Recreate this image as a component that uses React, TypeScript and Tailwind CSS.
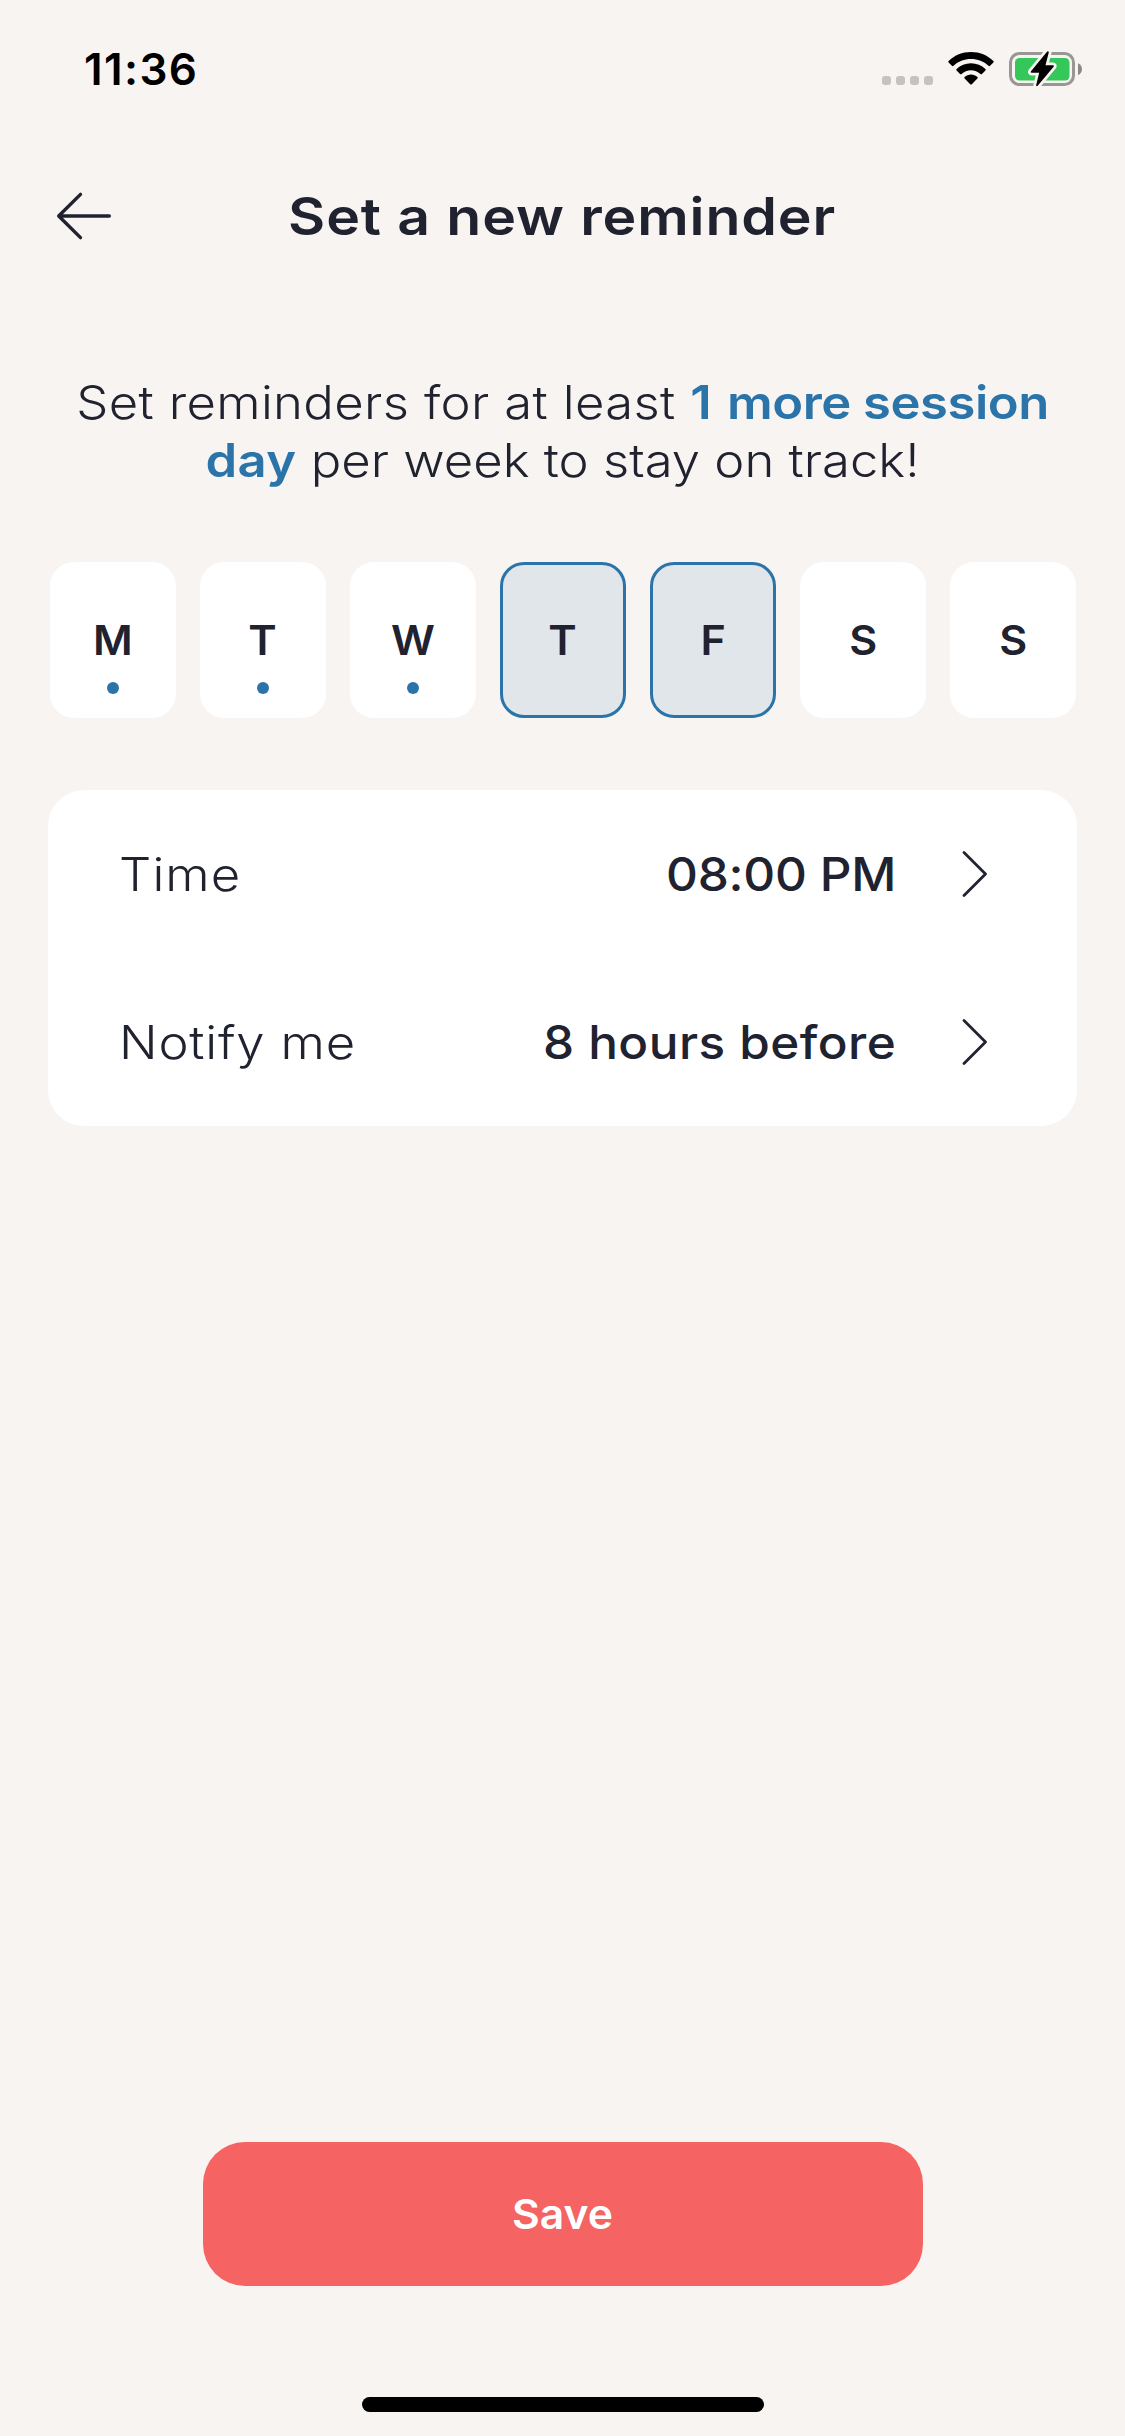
const FONT = "font-['Inter',sans-serif]";
const INK = "#20222f";

function SignalDots() {
  return (
    <div className="flex gap-[5px]">
      {[0, 1, 2, 3].map((i) => (
        <span key={i} className="size-[9px] rounded-[3px] bg-[#c5c2c0]" />
      ))}
    </div>
  );
}

function WifiIcon() {
  return (
    <svg width="46" height="34" viewBox="0 0 46 34" fill="#000">
      <path d="M23 0C31.6 0 39.500 3.300 45.400 8.900C45.900 9.400 45.900 10 45.400 10.500L42.100 13.800C41.600 14.300 41 14.300 40.500 13.800C35.800 9.500 29.700 7.100 23 7.100S10.200 9.500 5.500 13.800C5 14.300 4.400 14.300 3.900 13.800L0.600 10.500C0.100 10 0.100 9.400 0.600 8.900C6.500 3.300 14.400 0 23 0Z" />
      <path d="M23 11.200C28.500 11.200 33.600 13.300 37.400 16.900C37.900 17.400 37.900 18 37.400 18.500L34 21.900C33.500 22.400 32.900 22.400 32.400 21.900C29.900 19.600 26.600 18.200 23 18.200S16.100 19.600 13.600 21.900C13.100 22.400 12.500 22.400 12 21.900L8.600 18.500C8.100 18 8.100 17.400 8.600 16.900C12.400 13.300 17.500 11.200 23 11.200Z" />
      <path d="M23 22.500C25.500 22.500 27.700 23.400 29.400 24.900C29.900 25.400 29.900 26 29.400 26.500L23.800 32.200C23.300 32.700 22.700 32.700 22.200 32.200L16.600 26.500C16.100 26 16.100 25.400 16.600 24.900C18.300 23.400 20.500 22.500 23 22.500Z" />
    </svg>
  );
}

function BatteryIcon() {
  const bolt =
    "M38 0.800L22 20.200C21.400 21 21.800 21.700 22.700 21.700H30.200L27.200 33.800C26.900 35.300 28 35.700 28.900 34.600L44.600 15.700C45.200 14.900 44.900 14.200 43.900 14.200H36.500L39.700 1.800C40 0.300 38.900-0.300 38 0.800Z";
  return (
    <svg width="74" height="36" viewBox="0 0 74 36">
      <rect x="1.500" y="2.500" width="63" height="31" rx="9" fill="none" stroke="#999696" strokeWidth="3" />
      <path d="M69 12.300V24C71.400 23 73 20.800 73 18.150S71.400 13.300 69 12.300Z" fill="#8b8888" />
      <rect x="6" y="7" width="54.500" height="22.500" rx="4.500" fill="#34c759" />
      <path d={bolt} fill="#f8f4f1" stroke="#f8f4f1" strokeWidth="5.500" strokeLinejoin="round" />
      <path d={bolt} fill="#000" />
    </svg>
  );
}

function BackArrow() {
  return (
    <svg
      width="56"
      height="50"
      viewBox="0 0 56 50"
      fill="none"
      stroke={INK}
      strokeWidth="3.400"
      strokeLinecap="round"
      strokeLinejoin="round"
    >
      <path d="M53.300 25H2.700M24.500 3.400L2.700 25L24.500 46.600" />
    </svg>
  );
}

function Chevron() {
  return (
    <svg
      width="26"
      height="46"
      viewBox="0 0 26 46"
      fill="none"
      stroke={INK}
      strokeWidth="2.800"
      strokeLinecap="round"
      strokeLinejoin="round"
    >
      <path d="M2 1.600L23.500 23L2 44.400" />
    </svg>
  );
}

type Day = { label: string; dot?: boolean; selected?: boolean };

const days: Day[] = [
  { label: "M", dot: true },
  { label: "T", dot: true },
  { label: "W", dot: true },
  { label: "T", selected: true },
  { label: "F", selected: true },
  { label: "S" },
  { label: "S" },
];

function DayTile({ label, dot, selected }: Day) {
  return (
    <button
      className={
        "relative flex h-[156px] w-[126px] items-center justify-center rounded-[24px] pt-[2px] text-[41px] font-semibold " +
        (selected ? "border-[3px] border-[#2a74aa] bg-[#e1e6ea]" : "bg-white")
      }
    >
      <span className="scale-x-[1.05]">{label}</span>
      {dot && <span className="absolute bottom-[24px] left-[57px] size-3 rounded-full bg-[#2a74aa]" />}
    </button>
  );
}

type Setting = { label: string; value: string; labelTracking: string; valueTracking: string };

function SettingRow({ label, value, labelTracking, valueTracking }: Setting) {
  return (
    <div className="flex h-[168px] items-center pr-[89px] pl-[71px] text-[46.2px]">
      <span className={`origin-left scale-x-[1.1] pt-[2px] font-light ${labelTracking}`}>{label}</span>
      <span className={`mr-[66px] ml-auto origin-right scale-x-[1.07] pt-[2px] font-[450] ${valueTracking}`}>
        {value}
      </span>
      <Chevron />
    </div>
  );
}

export default function App() {
  return (
    <div className={`flex h-[2436px] w-[1125px] flex-col bg-[#f8f4f1] text-[#20222f] ${FONT}`}>
      <div className="flex h-[138px] items-center pr-[42px] pl-[84px]">
        <span className="text-[44px] font-semibold tracking-[1.4px] text-black">11:36</span>
        <div className="ml-auto flex items-center">
          <div className="mt-[23px] mr-[15px]">
            <SignalDots />
          </div>
          <div className="mr-[15px]">
            <WifiIcon />
          </div>
          <BatteryIcon />
        </div>
      </div>

      <header className="grid h-[156px] grid-cols-[1fr_auto_1fr] items-center px-[56px]">
        <button aria-label="Back">
          <BackArrow />
        </button>
        <h1 className="scale-x-[1.1] pt-[1px] text-[52px] font-semibold tracking-[0.8px]">Set a new reminder</h1>
        <span />
      </header>

      <div className="mt-[79px] scale-x-[1.1] text-center text-[46.2px] leading-[58px] font-light">
        <p>
          <span className="tracking-[0.32px]">Set reminders for at least </span>
          <b className="font-semibold tracking-[-0.22px] text-[#2a74aa]">
            1<span className="ml-[3px] tracking-[-0.45px]"> more session</span>
          </b>
        </p>
        <p>
          <b className="font-semibold tracking-[0.3px] text-[#2a74aa]">day</b>
          <span> per week to stay on track!</span>
        </p>
      </div>

      <div className="mt-[73px] ml-[50px] flex gap-6">
        {days.map((d, i) => (
          <DayTile key={i} {...d} />
        ))}
      </div>

      <section className="mx-[48px] mt-[72px] rounded-[36px] bg-white">
        <SettingRow label="Time" value="08:00 PM" labelTracking="tracking-[1px]" valueTracking="tracking-[-0.2px]" />
        <SettingRow
          label="Notify me"
          value="8 hours before"
          labelTracking="tracking-[0.75px]"
          valueTracking="tracking-[0.45px]"
        />
      </section>

      <button className="mx-auto mt-auto mb-[111px] h-[144px] w-[720px] rounded-[42px] bg-[#f56363] pt-[2px] text-[41px] font-semibold text-white">
        <span className="inline-block scale-x-[1.04]">Save</span>
      </button>
      <div className="mx-auto mb-[24px] h-[15px] w-[402px] rounded-full bg-black" />
    </div>
  );
}
